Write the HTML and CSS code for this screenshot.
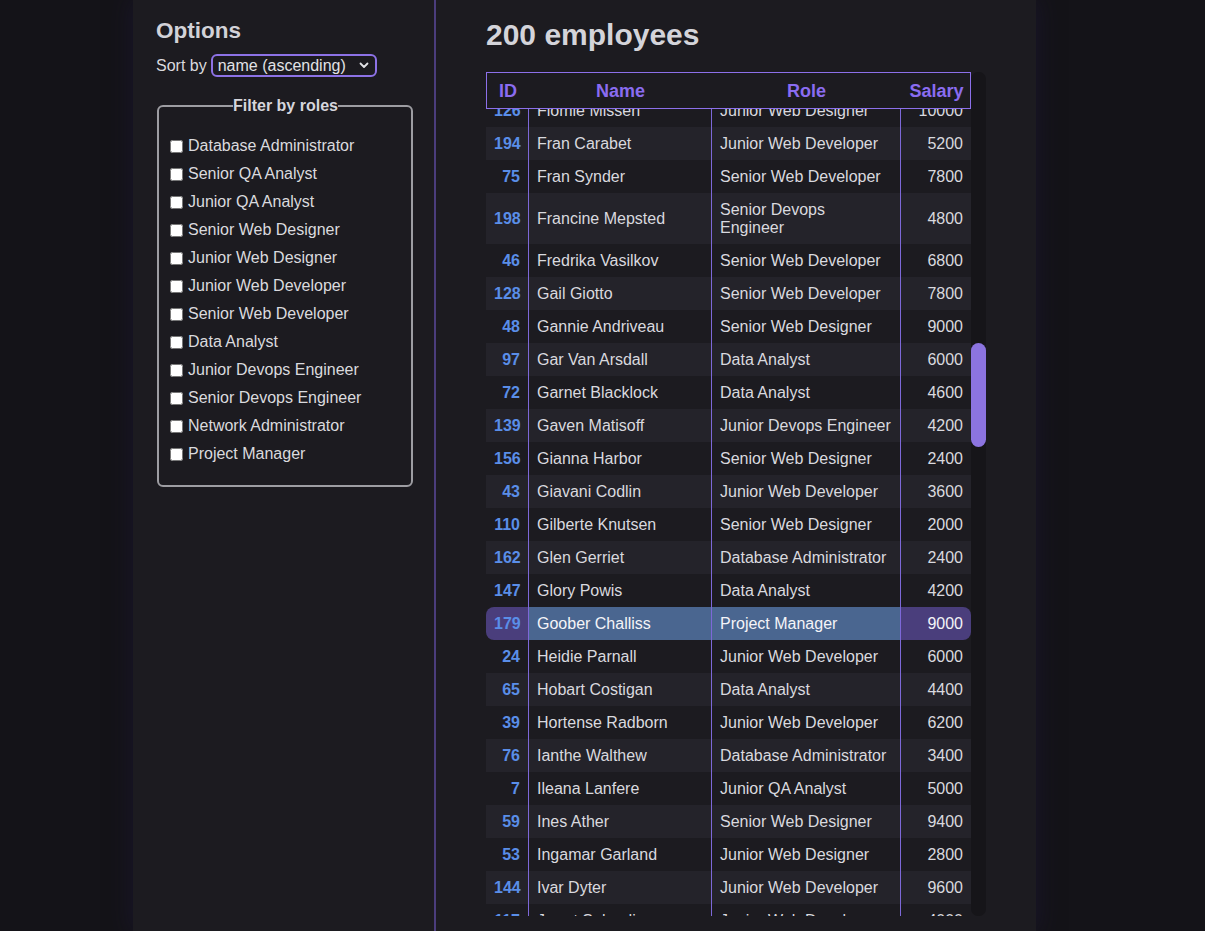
FILE: index.html
```html
<!DOCTYPE html>
<html lang="en">
<head>
<meta charset="utf-8">
<title>Employees</title>
<link rel="stylesheet" href="styles.css">
</head>
<body>
<div class="app">
  <aside class="sidebar">
    <h2 class="options-title">Options</h2>
    <div class="sort-row">
      <label for="sort">Sort by</label>
      <span class="select-wrap">
        <select id="sort" class="sort-select">
          <option>name (ascending)</option>
          <option>name (descending)</option>
          <option>salary (ascending)</option>
          <option>salary (descending)</option>
        </select>
        <svg class="chevron" width="10" height="7" viewBox="0 0 10 7"><path d="M1.5 1.5 L5 5 L8.5 1.5" fill="none" stroke="#e2e2e6" stroke-width="1.8" stroke-linecap="round" stroke-linejoin="round"/></svg>
      </span>
    </div>
    <fieldset class="roles">
      <legend>Filter by roles</legend>
      <label class="role"><input type="checkbox"> Database Administrator</label>
      <label class="role"><input type="checkbox"> Senior QA Analyst</label>
      <label class="role"><input type="checkbox"> Junior QA Analyst</label>
      <label class="role"><input type="checkbox"> Senior Web Designer</label>
      <label class="role"><input type="checkbox"> Junior Web Designer</label>
      <label class="role"><input type="checkbox"> Junior Web Developer</label>
      <label class="role"><input type="checkbox"> Senior Web Developer</label>
      <label class="role"><input type="checkbox"> Data Analyst</label>
      <label class="role"><input type="checkbox"> Junior Devops Engineer</label>
      <label class="role"><input type="checkbox"> Senior Devops Engineer</label>
      <label class="role"><input type="checkbox"> Network Administrator</label>
      <label class="role"><input type="checkbox"> Project Manager</label>
    </fieldset>
  </aside>
  <main class="main">
    <h1 class="count">200 employees</h1>
    <div class="table-area">
      <div class="table-view">
        <div class="head">
          <div class="hcell">ID</div>
          <div class="hcell">Name</div>
          <div class="hcell">Role</div>
          <div class="hcell">Salary</div>
        </div>
        <table class="grid">
          <colgroup><col class="c-id"><col class="c-name"><col class="c-role"><col class="c-sal"></colgroup>
          <tbody>
            <tr><td>126</td><td>Flomie Missen</td><td>Junior Web Designer</td><td>10000</td></tr>
            <tr><td>194</td><td>Fran Carabet</td><td>Junior Web Developer</td><td>5200</td></tr>
            <tr><td>75</td><td>Fran Synder</td><td>Senior Web Developer</td><td>7800</td></tr>
            <tr><td>198</td><td>Francine Mepsted</td><td>Senior Devops Engineer</td><td>4800</td></tr>
            <tr><td>46</td><td>Fredrika Vasilkov</td><td>Senior Web Developer</td><td>6800</td></tr>
            <tr><td>128</td><td>Gail Giotto</td><td>Senior Web Developer</td><td>7800</td></tr>
            <tr><td>48</td><td>Gannie Andriveau</td><td>Senior Web Designer</td><td>9000</td></tr>
            <tr><td>97</td><td>Gar Van Arsdall</td><td>Data Analyst</td><td>6000</td></tr>
            <tr><td>72</td><td>Garnet Blacklock</td><td>Data Analyst</td><td>4600</td></tr>
            <tr><td>139</td><td>Gaven Matisoff</td><td>Junior Devops Engineer</td><td>4200</td></tr>
            <tr><td>156</td><td>Gianna Harbor</td><td>Senior Web Designer</td><td>2400</td></tr>
            <tr><td>43</td><td>Giavani Codlin</td><td>Junior Web Developer</td><td>3600</td></tr>
            <tr><td>110</td><td>Gilberte Knutsen</td><td>Senior Web Designer</td><td>2000</td></tr>
            <tr><td>162</td><td>Glen Gerriet</td><td>Database Administrator</td><td>2400</td></tr>
            <tr><td>147</td><td>Glory Powis</td><td>Data Analyst</td><td>4200</td></tr>
            <tr class="selected"><td>179</td><td>Goober Challiss</td><td>Project Manager</td><td>9000</td></tr>
            <tr><td>24</td><td>Heidie Parnall</td><td>Junior Web Developer</td><td>6000</td></tr>
            <tr><td>65</td><td>Hobart Costigan</td><td>Data Analyst</td><td>4400</td></tr>
            <tr><td>39</td><td>Hortense Radborn</td><td>Junior Web Developer</td><td>6200</td></tr>
            <tr><td>76</td><td>Ianthe Walthew</td><td>Database Administrator</td><td>3400</td></tr>
            <tr><td>7</td><td>Ileana Lanfere</td><td>Junior QA Analyst</td><td>5000</td></tr>
            <tr><td>59</td><td>Ines Ather</td><td>Senior Web Designer</td><td>9400</td></tr>
            <tr><td>53</td><td>Ingamar Garland</td><td>Junior Web Designer</td><td>2800</td></tr>
            <tr><td>144</td><td>Ivar Dyter</td><td>Junior Web Developer</td><td>9600</td></tr>
            <tr><td>117</td><td>Jarret Salandine</td><td>Junior Web Developer</td><td>4000</td></tr>
          </tbody>
        </table>
      </div>
      <div class="scrollbar"><div class="thumb" style="margin-top:271px"></div></div>
    </div>
  </main>
</div>
</body>
</html>
```

FILE: styles.css
```css
* { box-sizing: border-box; }

html, body {
  margin: 0;
  height: 100%;
}

body {
  background: #141318;
  font-family: "Liberation Sans", Arial, sans-serif;
  font-size: 16px;
  color: #dadade;
  overflow: hidden;
}

.app {
  display: flex;
  width: 903px;
  min-height: 100vh;
  margin-left: 133px;
  background: #1c1b20;
  box-shadow: 0 0 22px rgba(30, 24, 60, 0.55);
}

.sidebar {
  width: 303px;
  flex: none;
  padding: 0 21px 0 23px;
  border-right: 2px solid #4b3d7c;
}

.options-title {
  margin: 17px 0 0;
  font-size: 22.5px;
  line-height: 27px;
  font-weight: bold;
  color: #d2d2d8;
}

.sort-row {
  margin-top: 10px;
  display: flex;
  align-items: center;
  gap: 4px;
  line-height: 18px;
}

.select-wrap {
  position: relative;
  display: inline-block;
}

.sort-select {
  appearance: none;
  -webkit-appearance: none;
  width: 166px;
  height: 23px;
  padding: 0 0 0 5px;
  border: 2px solid #8d72e6;
  border-radius: 6px;
  background: #1c1b20;
  color: #e2e2e6;
  font-family: "Liberation Sans", Arial, sans-serif;
  font-size: 16px;
  line-height: 19px;
  outline: none;
}

.chevron {
  position: absolute;
  right: 8px;
  top: 8px;
  pointer-events: none;
}

.roles {
  margin: 20px 0 0 1px;
  width: 256px;
  padding: 17px 10px 17px 11px;
  border: 2px solid #9d9da2;
  border-radius: 6px;
  display: flex;
  flex-direction: column;
}

.roles legend {
  margin: 0 auto;
  padding: 0;
  font-weight: bold;
  color: #d6d6dc;
  line-height: 18px;
}

.role {
  display: flex;
  align-items: center;
  height: 28px;
  gap: 5px;
  line-height: 18px;
  white-space: nowrap;
}

.role input {
  margin: 0;
  width: 13px;
  height: 13px;
}

.main {
  flex: 1;
  padding: 0 50px;
}

.count {
  margin: 17px 0 19px;
  font-size: 30px;
  line-height: 36px;
  font-weight: bold;
  color: #d4d4da;
}

.table-area {
  display: flex;
  height: 844px;
}

.table-view {
  width: 485px;
  height: 844px;
  overflow: hidden;
  display: grid;
  grid-template-columns: 485px;
  align-items: start;
}

.head {
  grid-area: 1 / 1;
  z-index: 1;
  display: grid;
  grid-template-columns: 42px 183px 189px 71px;
  height: 37px;
  border: 1px solid #8c70ea;
  background: #1c1b20;
  color: #8a6cf0;
  font-size: 18px;
  font-weight: bold;
}

.hcell {
  display: flex;
  align-items: center;
  justify-content: center;
  line-height: 20px;
}

.grid {
  grid-area: 1 / 1;
  margin-top: 22px;
  width: 485px;
  table-layout: fixed;
  border-collapse: separate;
  border-spacing: 0;
}

.c-id { width: 42px; }
.c-name { width: 183px; }
.c-role { width: 189px; }
.c-sal { width: 71px; }

.grid td {
  padding: 7.5px 8px;
  line-height: 18px;
  vertical-align: middle;
  color: #d9d9df;
}

.grid td + td {
  border-left: 1px solid #7d68d8;
}

.grid td:first-child {
  text-align: right;
  font-weight: bold;
  color: #5a8ee8;
}

.grid td:last-child {
  text-align: right;
}

.grid tr:nth-child(even) td {
  background: #24232a;
}

.grid tr.selected td {
  background: #4a6690;
  color: #f4f4f8;
}

.grid tr.selected td:first-child {
  background: #4a3e7c;
  color: #5a8ee8;
  border-radius: 8px 0 0 8px;
}

.grid tr.selected td:last-child {
  background: #4a3e7c;
  border-radius: 0 8px 8px 0;
}

.scrollbar {
  width: 15px;
  height: 844px;
  background: #161519;
  border-radius: 7px;
}

.thumb {
  width: 15px;
  height: 104px;
  border-radius: 8px;
  background: #8c74e0;
}
```
